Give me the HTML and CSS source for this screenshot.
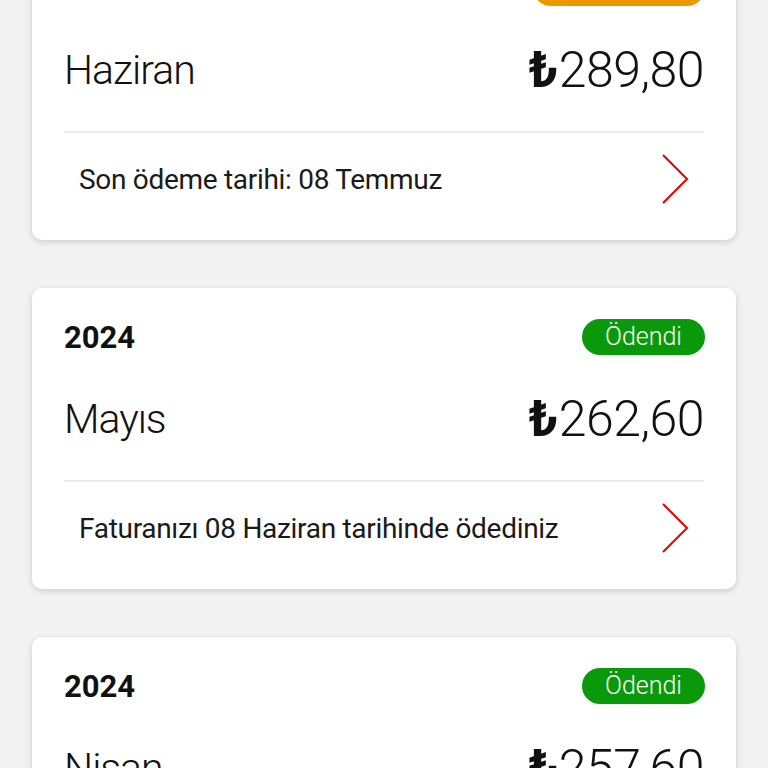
FILE: index.html
```html
<!DOCTYPE html>
<html lang="tr">
<head>
  <meta charset="UTF-8" />
  <meta name="viewport" content="width=device-width, initial-scale=1.0"/>
  <title>Faturalarım</title>
  <link rel="stylesheet" href="styles.css">
</head>
<body>

  <div class="bill-list">

    <div class="bill-card first">
      <div class="bill-head">
        <span class="year">2024</span>
        <span class="badge unpaid">Ödenmedi</span>
      </div>
      <div class="bill-main">
        <span class="month">Haziran</span>
        <span class="amount"><b>₺</b>289,80</span>
      </div>
      <div class="bill-foot">
        <span>Son ödeme tarihi: 08 Temmuz</span>
        <svg class="chevron" width="28" height="50" viewBox="0 0 28 50"><path d="M2 1 L26 25 L2 49" fill="none" stroke="#e60000" stroke-width="2"/></svg>
      </div>
    </div>

    <div class="bill-card">
      <div class="bill-head">
        <span class="year">2024</span>
        <span class="badge paid">Ödendi</span>
      </div>
      <div class="bill-main">
        <span class="month">Mayıs</span>
        <span class="amount"><b>₺</b>262,60</span>
      </div>
      <div class="bill-foot">
        <span>Faturanızı 08 Haziran tarihinde ödediniz</span>
        <svg class="chevron" width="28" height="50" viewBox="0 0 28 50"><path d="M2 1 L26 25 L2 49" fill="none" stroke="#e60000" stroke-width="2"/></svg>
      </div>
    </div>

    <div class="bill-card">
      <div class="bill-head">
        <span class="year">2024</span>
        <span class="badge paid">Ödendi</span>
      </div>
      <div class="bill-main">
        <span class="month">Nisan</span>
        <span class="amount"><b>₺</b>257,60</span>
      </div>
      <div class="bill-foot">
        <span>Faturanızı 08 Mayıs tarihinde ödediniz</span>
        <svg class="chevron" width="28" height="50" viewBox="0 0 28 50"><path d="M2 1 L26 25 L2 49" fill="none" stroke="#e60000" stroke-width="2"/></svg>
      </div>
    </div>

  </div>

</body>
</html>
```

FILE: styles.css
```css
body {
  margin: 0;
  background: #f2f2f2;
  font-family: Roboto, "Noto Sans", sans-serif;
  color: #111;
  overflow: hidden;
}

.bill-list {
  display: flex;
  flex-direction: column;
  gap: 48px;
  padding: 0 32px;
}

.bill-card {
  background: #fff;
  border-radius: 10px;
  box-shadow: 0 2px 6px rgba(0, 0, 0, 0.16);
  padding: 31px 32px 0;
}

.bill-card.first {
  margin-top: -61px;
}

.bill-head {
  display: flex;
  justify-content: space-between;
  align-items: center;
  height: 36px;
}

.year {
  font-size: 31px;
  font-weight: 700;
}

.badge {
  height: 36px;
  line-height: 36px;
  border-radius: 18px;
  padding: 0 23px;
  margin-right: -1px;
  color: #fff;
  font-size: 25px;
  font-weight: 300;
}

.badge.paid {
  background: #0a990a;
}

.badge.unpaid {
  background: #eb9700;
  padding: 0 30px;
}

.bill-main {
  display: flex;
  justify-content: space-between;
  align-items: center;
  margin-top: 39px;
  height: 50px;
  margin-bottom: 36px;
}

.month {
  font-size: 41px;
  font-weight: 300;
  letter-spacing: -1px;
}

.amount {
  font-size: 50px;
  font-weight: 300;
  letter-spacing: -0.5px;
}

.amount b {
  font-weight: 700;
  margin-right: 1px;
}

.bill-foot {
  display: flex;
  justify-content: space-between;
  align-items: center;
  border-top: 2px solid #ebebeb;
  padding: 21px 15px 36px;
  font-size: 28px;
  font-weight: 400;
  letter-spacing: -0.3px;
  color: #1a1a1a;
}

.chevron {
  display: block;
}
```
